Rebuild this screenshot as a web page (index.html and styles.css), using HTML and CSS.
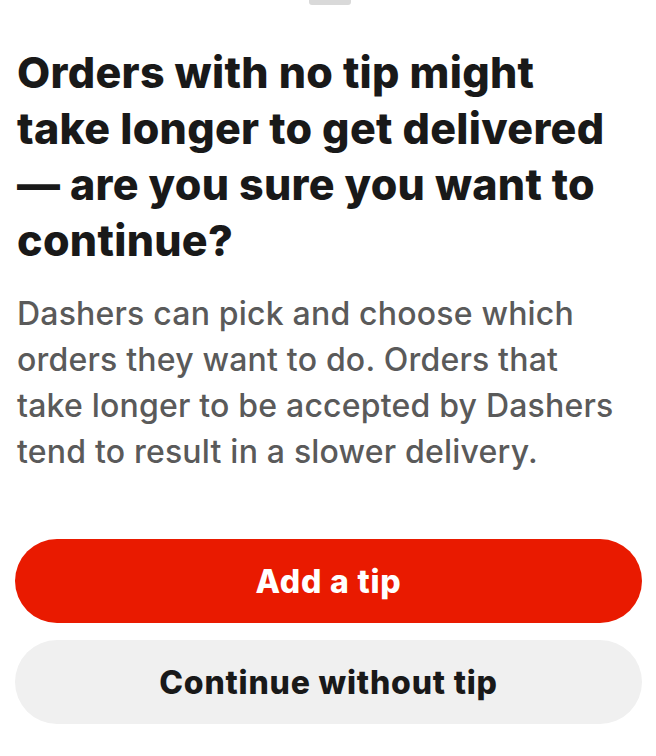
FILE: index.html
```html
<!DOCTYPE html>
<html lang="en">
<head>
    <meta charset="UTF-8">
    <meta name="viewport" content="width=device-width, initial-scale=1.0">
    <title>No tip</title>
    <link rel="stylesheet" href="styles.css">
</head>
<body>
    <div class="sheet">
        <div class="handle"></div>
        <h1 class="title">Orders with no tip might<br>take longer to get delivered<br>— are you sure you want to<br>continue?</h1>
        <p class="desc">Dashers can pick and choose which<br>orders they want to do. Orders that<br>take longer to be accepted by Dashers<br>tend to result in a slower delivery.</p>
        <div class="actions">
            <button class="btn btn-primary">Add a tip</button>
            <button class="btn btn-secondary">Continue without tip</button>
        </div>
    </div>
</body>
</html>
```

FILE: styles.css
```css
body {
    margin: 0;
    background: #fff;
    font-family: Inter, "Liberation Sans", sans-serif;
}

.sheet {
    width: 656px;
    height: 756px;
    padding: 0 14px 0 17px;
    box-sizing: border-box;
    display: flex;
    flex-direction: column;
}

/* grab bar at the top of the sheet */
.handle {
    align-self: center;
    width: 42px;
    height: 5px;
    background: #d9d9d9;
    border-radius: 0 0 3px 3px;
}

.title {
    margin: 39px 0 0;
    font-size: 43px;
    line-height: 56px;
    font-weight: 800;
    color: #191919;
    letter-spacing: 0.3px;
    white-space: nowrap;
}

.desc {
    margin: 23px 0 0;
    font-size: 32px;
    line-height: 46px;
    font-weight: 500;
    color: #5a5a5a;
    letter-spacing: 0.2px;
    white-space: nowrap;
}

.actions {
    margin-top: 64px;
    display: flex;
    flex-direction: column;
    gap: 17px;
    margin-left: -2px;
}

.btn {
    height: 84px;
    border: none;
    border-radius: 42px;
    font-family: inherit;
    font-size: 32px;
    font-weight: 800;
    letter-spacing: 0.8px;
    cursor: pointer;
}

.btn-primary {
    background: #e91a00;
    color: #fff;
}

.btn-secondary {
    background: #f0f0f0;
    color: #191919;
}
```
